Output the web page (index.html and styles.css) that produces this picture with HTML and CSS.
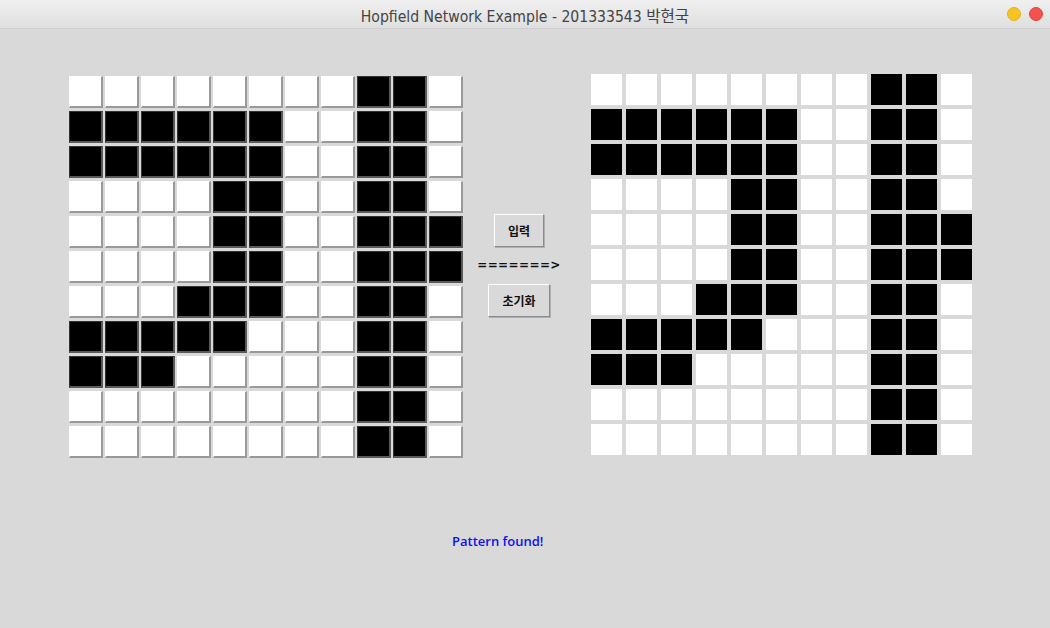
FILE: index.html
```html
<!DOCTYPE html>
<html>
<head>
<meta charset="utf-8">
<title>Hopfield Network Example</title>
<link rel="stylesheet" href="styles.css">
</head>
<body>
<div class="window">
  <div class="titlebar">
    <span class="title">Hopfield Network Example - 201333543 박현국</span>
    <div class="lights"><span class="dot yellow"></span><span class="dot red"></span></div>
  </div>
  <div class="content">
    <div class="row">
      <div class="grid input-grid">
        <div class="c"></div><div class="c"></div><div class="c"></div><div class="c"></div><div class="c"></div><div class="c"></div><div class="c"></div><div class="c"></div><div class="c b"></div><div class="c b"></div><div class="c"></div>
        <div class="c b"></div><div class="c b"></div><div class="c b"></div><div class="c b"></div><div class="c b"></div><div class="c b"></div><div class="c"></div><div class="c"></div><div class="c b"></div><div class="c b"></div><div class="c"></div>
        <div class="c b"></div><div class="c b"></div><div class="c b"></div><div class="c b"></div><div class="c b"></div><div class="c b"></div><div class="c"></div><div class="c"></div><div class="c b"></div><div class="c b"></div><div class="c"></div>
        <div class="c"></div><div class="c"></div><div class="c"></div><div class="c"></div><div class="c b"></div><div class="c b"></div><div class="c"></div><div class="c"></div><div class="c b"></div><div class="c b"></div><div class="c"></div>
        <div class="c"></div><div class="c"></div><div class="c"></div><div class="c"></div><div class="c b"></div><div class="c b"></div><div class="c"></div><div class="c"></div><div class="c b"></div><div class="c b"></div><div class="c b"></div>
        <div class="c"></div><div class="c"></div><div class="c"></div><div class="c"></div><div class="c b"></div><div class="c b"></div><div class="c"></div><div class="c"></div><div class="c b"></div><div class="c b"></div><div class="c b"></div>
        <div class="c"></div><div class="c"></div><div class="c"></div><div class="c b"></div><div class="c b"></div><div class="c b"></div><div class="c"></div><div class="c"></div><div class="c b"></div><div class="c b"></div><div class="c"></div>
        <div class="c b"></div><div class="c b"></div><div class="c b"></div><div class="c b"></div><div class="c b"></div><div class="c"></div><div class="c"></div><div class="c"></div><div class="c b"></div><div class="c b"></div><div class="c"></div>
        <div class="c b"></div><div class="c b"></div><div class="c b"></div><div class="c"></div><div class="c"></div><div class="c"></div><div class="c"></div><div class="c"></div><div class="c b"></div><div class="c b"></div><div class="c"></div>
        <div class="c"></div><div class="c"></div><div class="c"></div><div class="c"></div><div class="c"></div><div class="c"></div><div class="c"></div><div class="c"></div><div class="c b"></div><div class="c b"></div><div class="c"></div>
        <div class="c"></div><div class="c"></div><div class="c"></div><div class="c"></div><div class="c"></div><div class="c"></div><div class="c"></div><div class="c"></div><div class="c b"></div><div class="c b"></div><div class="c"></div>
      </div>
      <div class="controls">
        <button class="btn btn-input">입력</button>
        <div class="arrow">=======&gt;</div>
        <button class="btn btn-reset">초기화</button>
      </div>
      <div class="grid output-grid">
        <div class="o"></div><div class="o"></div><div class="o"></div><div class="o"></div><div class="o"></div><div class="o"></div><div class="o"></div><div class="o"></div><div class="o b"></div><div class="o b"></div><div class="o"></div>
        <div class="o b"></div><div class="o b"></div><div class="o b"></div><div class="o b"></div><div class="o b"></div><div class="o b"></div><div class="o"></div><div class="o"></div><div class="o b"></div><div class="o b"></div><div class="o"></div>
        <div class="o b"></div><div class="o b"></div><div class="o b"></div><div class="o b"></div><div class="o b"></div><div class="o b"></div><div class="o"></div><div class="o"></div><div class="o b"></div><div class="o b"></div><div class="o"></div>
        <div class="o"></div><div class="o"></div><div class="o"></div><div class="o"></div><div class="o b"></div><div class="o b"></div><div class="o"></div><div class="o"></div><div class="o b"></div><div class="o b"></div><div class="o"></div>
        <div class="o"></div><div class="o"></div><div class="o"></div><div class="o"></div><div class="o b"></div><div class="o b"></div><div class="o"></div><div class="o"></div><div class="o b"></div><div class="o b"></div><div class="o b"></div>
        <div class="o"></div><div class="o"></div><div class="o"></div><div class="o"></div><div class="o b"></div><div class="o b"></div><div class="o"></div><div class="o"></div><div class="o b"></div><div class="o b"></div><div class="o b"></div>
        <div class="o"></div><div class="o"></div><div class="o"></div><div class="o b"></div><div class="o b"></div><div class="o b"></div><div class="o"></div><div class="o"></div><div class="o b"></div><div class="o b"></div><div class="o"></div>
        <div class="o b"></div><div class="o b"></div><div class="o b"></div><div class="o b"></div><div class="o b"></div><div class="o"></div><div class="o"></div><div class="o"></div><div class="o b"></div><div class="o b"></div><div class="o"></div>
        <div class="o b"></div><div class="o b"></div><div class="o b"></div><div class="o"></div><div class="o"></div><div class="o"></div><div class="o"></div><div class="o"></div><div class="o b"></div><div class="o b"></div><div class="o"></div>
        <div class="o"></div><div class="o"></div><div class="o"></div><div class="o"></div><div class="o"></div><div class="o"></div><div class="o"></div><div class="o"></div><div class="o b"></div><div class="o b"></div><div class="o"></div>
        <div class="o"></div><div class="o"></div><div class="o"></div><div class="o"></div><div class="o"></div><div class="o"></div><div class="o"></div><div class="o"></div><div class="o b"></div><div class="o b"></div><div class="o"></div>
      </div>
    </div>
    <div class="status">Pattern found!</div>
  </div>
</div>
</body>
</html>
```
FILE: styles.css
```css
* { box-sizing: border-box; }
html, body { margin: 0; padding: 0; }
body {
  width: 1050px;
  height: 628px;
  overflow: hidden;
  background: #d9d9d9;
  font-family: "Liberation Sans", "Noto Sans CJK KR", sans-serif;
}
.window { width: 1050px; height: 628px; display: flex; flex-direction: column; }
.titlebar {
  height: 29px;
  flex: none;
  position: relative;
  display: flex;
  align-items: center;
  justify-content: center;
  background: linear-gradient(#f0f0f0, #dfdfdf);
  border-bottom: 1px solid #cfcfcf;
}
.title {
  font-family: "DejaVu Sans Condensed", "Liberation Sans", "Noto Sans CJK KR", sans-serif;
  font-size: 15.6px;
  color: #444;
  padding-top: 1px;
}
.lights {
  position: absolute;
  right: 7px;
  top: 7px;
  display: flex;
  gap: 8px;
}
.dot { width: 14px; height: 14px; border-radius: 50%; display: block; }
.yellow { background: #f7c325; border: 1px solid #e6b21a; }
.red { background: #f4524f; border: 1px solid #e04540; }
.content { flex: 1; display: flex; flex-direction: column; }
.row {
  display: flex;
  align-items: flex-start;
  padding-left: 69px;
  padding-top: 47px;
}
.grid { display: grid; }
.input-grid {
  grid-template-columns: repeat(11, 34px);
  grid-auto-rows: 32px;
  column-gap: 2px;
  row-gap: 3px;
}
.c {
  background: #fff;
  border-top: 1px solid #fff;
  border-left: 1px solid #fff;
  border-right: 2px solid #999;
  border-bottom: 2px solid #999;
}
.c.b {
  background: #000;
  border-top: 1px solid #333;
  border-left: 1px solid #333;
  border-right: 2px solid #5a5a5a;
  border-bottom: 2px solid #5a5a5a;
}
.controls {
  width: 128px;
  padding-right: 16px;
  display: flex;
  flex-direction: column;
  align-items: center;
  margin-top: 138px;
}
.btn {
  font-family: "Noto Sans CJK KR", sans-serif;
  font-weight: 700;
  font-size: 12px;
  color: #111;
  background: #d9d9d9;
  border-top: 1px solid #fff;
  border-left: 1px solid #fff;
  border-right: 1px solid #8a8a8a;
  border-bottom: 1px solid #8a8a8a;
  box-shadow: 1px 1px 0 #b0b0b0;
  padding: 0;
  height: 33px;
  line-height: 30px;
}
.btn-input { width: 50px; }
.btn-reset { width: 62px; }
.arrow {
  font-family: "DejaVu Sans", sans-serif;
  font-weight: 700;
  font-size: 12px;
  letter-spacing: 0.4px;
  color: #111;
  height: 37px;
  line-height: 37px;
}
.output-grid {
  grid-template-columns: repeat(11, 31px);
  grid-auto-rows: 31px;
  gap: 4px;
  margin-top: -2px;
}
.o { background: #fff; }
.o.b { background: #000; }
.status {
  padding-left: 452px;
  margin-top: 74px;
  font-family: "Open Sans", sans-serif;
  font-weight: 600;
  font-size: 13px;
  color: #1010f0;
}
```
